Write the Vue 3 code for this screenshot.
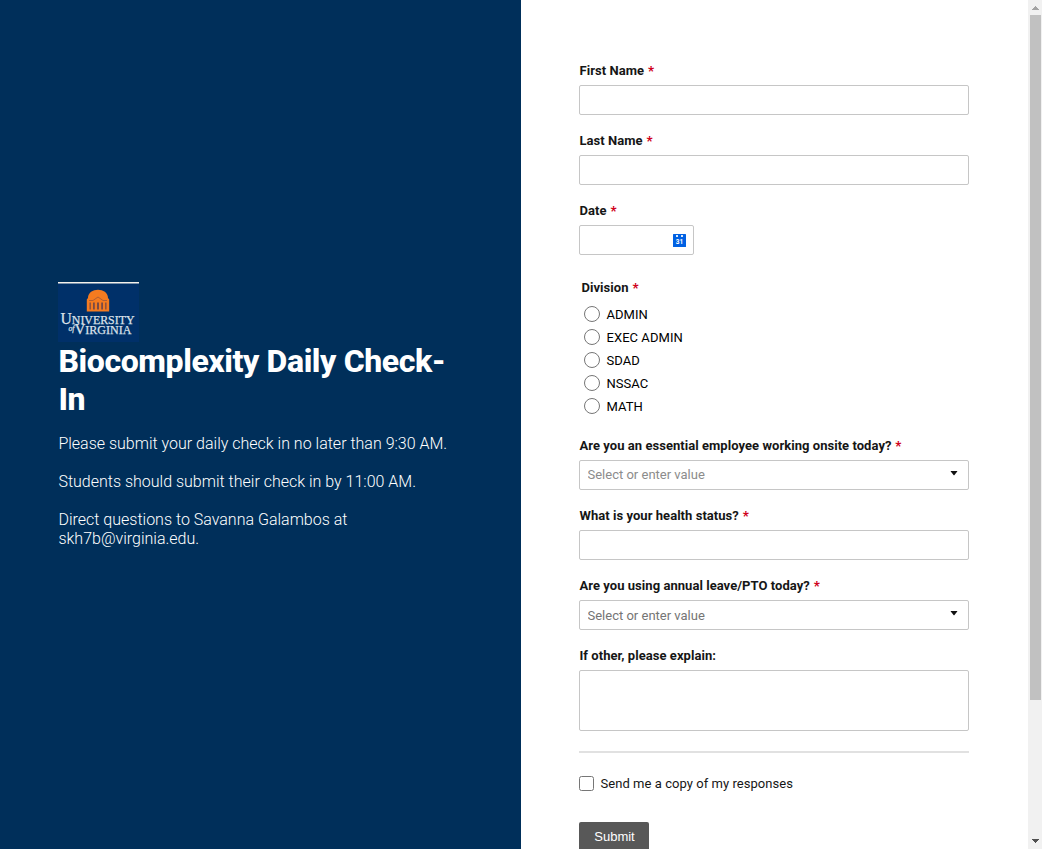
<script setup>
import { ref } from 'vue'

const divisions = ['ADMIN', 'EXEC ADMIN', 'SDAD', 'NSSAC', 'MATH']
const division = ref('')
const copy = ref(false)
</script>

<template>
  <div class="page">
    <aside class="intro">
      <svg class="logo" width="81" height="60" viewBox="0 0 81 60">
        <rect width="81" height="60" fill="#003069" />
        <rect width="81" height="1.5" fill="#f4f1ec" />
        <path d="M30 16C30 5 50 5 50 16l1.200 1.500v12H28.800v-12z" fill="#f47b20" />
        <path d="M31.500 20.500h1.300v7h-1.300zM35 20.500h1.800v7H35zM39 20.500h2v7h-2zM43.200 20.500H45v7h-1.800zM47.200 20.500h1.300v7h-1.300z" fill="#7a4a45" />
        <path d="M31 18.500h4l5-3.500 5 3.500h4" fill="none" stroke="#a85a35" stroke-width="0.9" />
        <g fill="#dce2ea" stroke="#dce2ea" stroke-width="0.250" font-family="Liberation Serif, serif" font-size="12.500">
          <text x="2.500" y="41.500" textLength="74" lengthAdjust="spacingAndGlyphs"><tspan font-size="16.500">U</tspan>NIVERSITY</text>
          <text x="10.500" y="52" textLength="63" lengthAdjust="spacingAndGlyphs"><tspan font-size="8" font-style="italic" dy="-3">of</tspan><tspan font-size="15.500" dy="3">V</tspan>IRGINIA</text>
        </g>
      </svg>
      <h1>Biocomplexity Daily Check-In</h1>
      <p>Please submit your daily check in no later than 9:30 AM.</p>
      <p>Students should submit their check in by 11:00 AM.</p>
      <p>Direct questions to Savanna Galambos at skh7b@virginia.edu.</p>
    </aside>

    <form class="form" @submit.prevent>
      <div class="field">
        <label for="first">First Name <b>*</b></label>
        <input id="first" class="box" type="text" />
      </div>
      <div class="field">
        <label for="last">Last Name <b>*</b></label>
        <input id="last" class="box" type="text" />
      </div>
      <div class="field">
        <label for="date">Date <b>*</b></label>
        <div class="box date">
          <input id="date" class="bare" type="text" />
          <svg width="13" height="13" viewBox="0 0 13 13">
            <rect width="13" height="13" rx="0.5" fill="#0061e3" />
            <path d="M3 1h2v2H3zM8 1h2v2H8z" fill="#dbe9fc" />
            <text x="6.500" y="10.200" text-anchor="middle" font-family="Roboto, sans-serif" font-size="6.500" font-weight="700" fill="#fff">31</text>
          </svg>
        </div>
      </div>

      <fieldset>
        <legend>Division <b>*</b></legend>
        <label v-for="d in divisions" :key="d" class="option">
          <input v-model="division" type="radio" name="division" :value="d" />
          <span>{{ d }}</span>
        </label>
      </fieldset>

      <div class="field">
        <label for="onsite">Are you an essential employee working onsite today? <b>*</b></label>
        <div class="box select">
          <input id="onsite" class="bare first-select" type="text" placeholder="Select or enter value" />
          <svg width="8" height="5" viewBox="0 0 8 5"><path d="M1 0h6q.6 0 .2.6L4.500 3.900q-.5.500-1 0L.8.600Q.4 0 1 0z" fill="#111" /></svg>
        </div>
      </div>
      <div class="field">
        <label for="health">What is your health status? <b>*</b></label>
        <input id="health" class="box" type="text" />
      </div>
      <div class="field">
        <label for="leave">Are you using annual leave/PTO today? <b>*</b></label>
        <div class="box select">
          <input id="leave" class="bare" type="text" placeholder="Select or enter value" />
          <svg width="8" height="5" viewBox="0 0 8 5"><path d="M1 0h6q.6 0 .2.6L4.500 3.900q-.5.500-1 0L.8.600Q.4 0 1 0z" fill="#111" /></svg>
        </div>
      </div>
      <div class="field explain">
        <label for="explain">If other, please explain:</label>
        <textarea id="explain" class="box area"></textarea>
      </div>
      <hr />
      <label class="copy">
        <input v-model="copy" type="checkbox" />
        <span>Send me a copy of my responses</span>
      </label>
      <button type="submit">Submit</button>
    </form>

    <div class="scrollbar">
      <svg width="15" height="15" viewBox="0 0 15 15" shape-rendering="crispEdges"><path d="M4 10V9h1V8h1V7h1V6h1v1h1v1h1v1h1v1z" fill="#a3a3a3" /></svg>
      <div class="thumb"></div>
      <svg class="down" width="15" height="15" viewBox="0 0 15 15" shape-rendering="crispEdges"><path d="M4 5v1h1v1h1v1h1v1h1V8h1V7h1V6h1V5z" fill="#505050" /></svg>
    </div>
  </div>
</template>

<style>
body {
  margin: 0;
}
</style>

<style scoped>
.page {
  display: flex;
  width: 1042px;
  height: 849px;
  overflow: hidden;
  background: #fff;
  color: #161616;
  font-family: Roboto, sans-serif;
  font-size: 13px;
}
.intro {
  box-sizing: border-box;
  flex: 0 0 521px;
  padding: 282px 58px 0;
  background: #002f5a;
  color: #fff;
}
.logo {
  display: block;
}
h1 {
  margin: 0 0 16px 0.4px;
  font-size: 32px;
  font-weight: 800;
  letter-spacing: -0.4px;
  line-height: 38px;
}
.intro p {
  margin: 0 0 19px 0.4px;
  font-size: 16px;
  font-weight: 300;
  line-height: 19px;
}
.form {
  box-sizing: border-box;
  flex: 0 0 506px;
  padding: 63px 58px 0;
}
.field {
  display: flex;
  flex-direction: column;
  width: 390px;
  margin-bottom: 18px;
}
.field > label {
  height: 16px;
  margin: 0 0 6px 0.5px;
  font-weight: 700;
  letter-spacing: 0.045px;
  line-height: 16px;
  white-space: nowrap;
}
b {
  margin-left: 0.6px;
  color: #d0021b;
}
.box {
  box-sizing: border-box;
  width: 100%;
  height: 30px;
  margin: 0;
  padding: 0 8px;
  border: 1px solid #c6c6c6;
  border-radius: 2px;
  background: #fff;
  outline: none;
}
.date {
  display: flex;
  align-items: center;
  width: 115px;
  padding: 0 7px;
}
.date svg {
  flex: none;
}
.select {
  display: flex;
  align-items: flex-start;
  padding: 0 10px 0 7.5px;
}
.select svg {
  margin-top: 10px;
}
.bare {
  flex: 1;
  min-width: 0;
  height: 28px;
  padding: 0;
  border: 0;
  outline: none;
  background: transparent;
  font: 13px Roboto, sans-serif;
}
.bare::placeholder {
  color: #757575;
  opacity: 1;
}
.first-select {
  height: 27px;
}
.first-select::placeholder {
  color: #8c8c8c;
}
fieldset {
  width: 388px;
  margin: 25px 0 24px 2.5px;
  padding: 0;
  border: 0;
}
legend {
  height: 26px;
  padding: 0;
  font-weight: 700;
  letter-spacing: 0.045px;
  line-height: 16px;
}
.option {
  display: flex;
  align-items: center;
  height: 16px;
  margin: 0 0 7px 2.5px;
  color: #000;
  letter-spacing: 0.05px;
}
.option:last-child {
  margin-bottom: 0;
}
.option input {
  width: 16px;
  height: 16px;
  margin: 0 6.5px 0 0;
}
.area {
  height: 61px;
  resize: none;
}
.explain {
  margin-bottom: 20px;
}
hr {
  width: 390px;
  height: 2px;
  margin: 0;
  border: 0;
  background: #e1e1e1;
}
.copy {
  display: flex;
  align-items: center;
  height: 15px;
  margin: 23px 0 31px;
  letter-spacing: 0.05px;
}
.copy input {
  width: 15px;
  height: 15px;
  margin: 0 6.5px 0 0;
}
button {
  display: block;
  width: 70px;
  height: 30px;
  padding: 0 0 1px 1px;
  border: 0;
  border-radius: 2px;
  background: #585858;
  color: #fff;
  font: 13px "Liberation Sans", Arial, sans-serif;
}
.scrollbar {
  display: flex;
  flex: 0 0 15px;
  flex-direction: column;
  background: #f1f1f1;
}
.thumb {
  width: 11px;
  height: 685px;
  margin-left: 2px;
  background: #c1c1c1;
}
.down {
  margin-top: auto;
}
</style>
